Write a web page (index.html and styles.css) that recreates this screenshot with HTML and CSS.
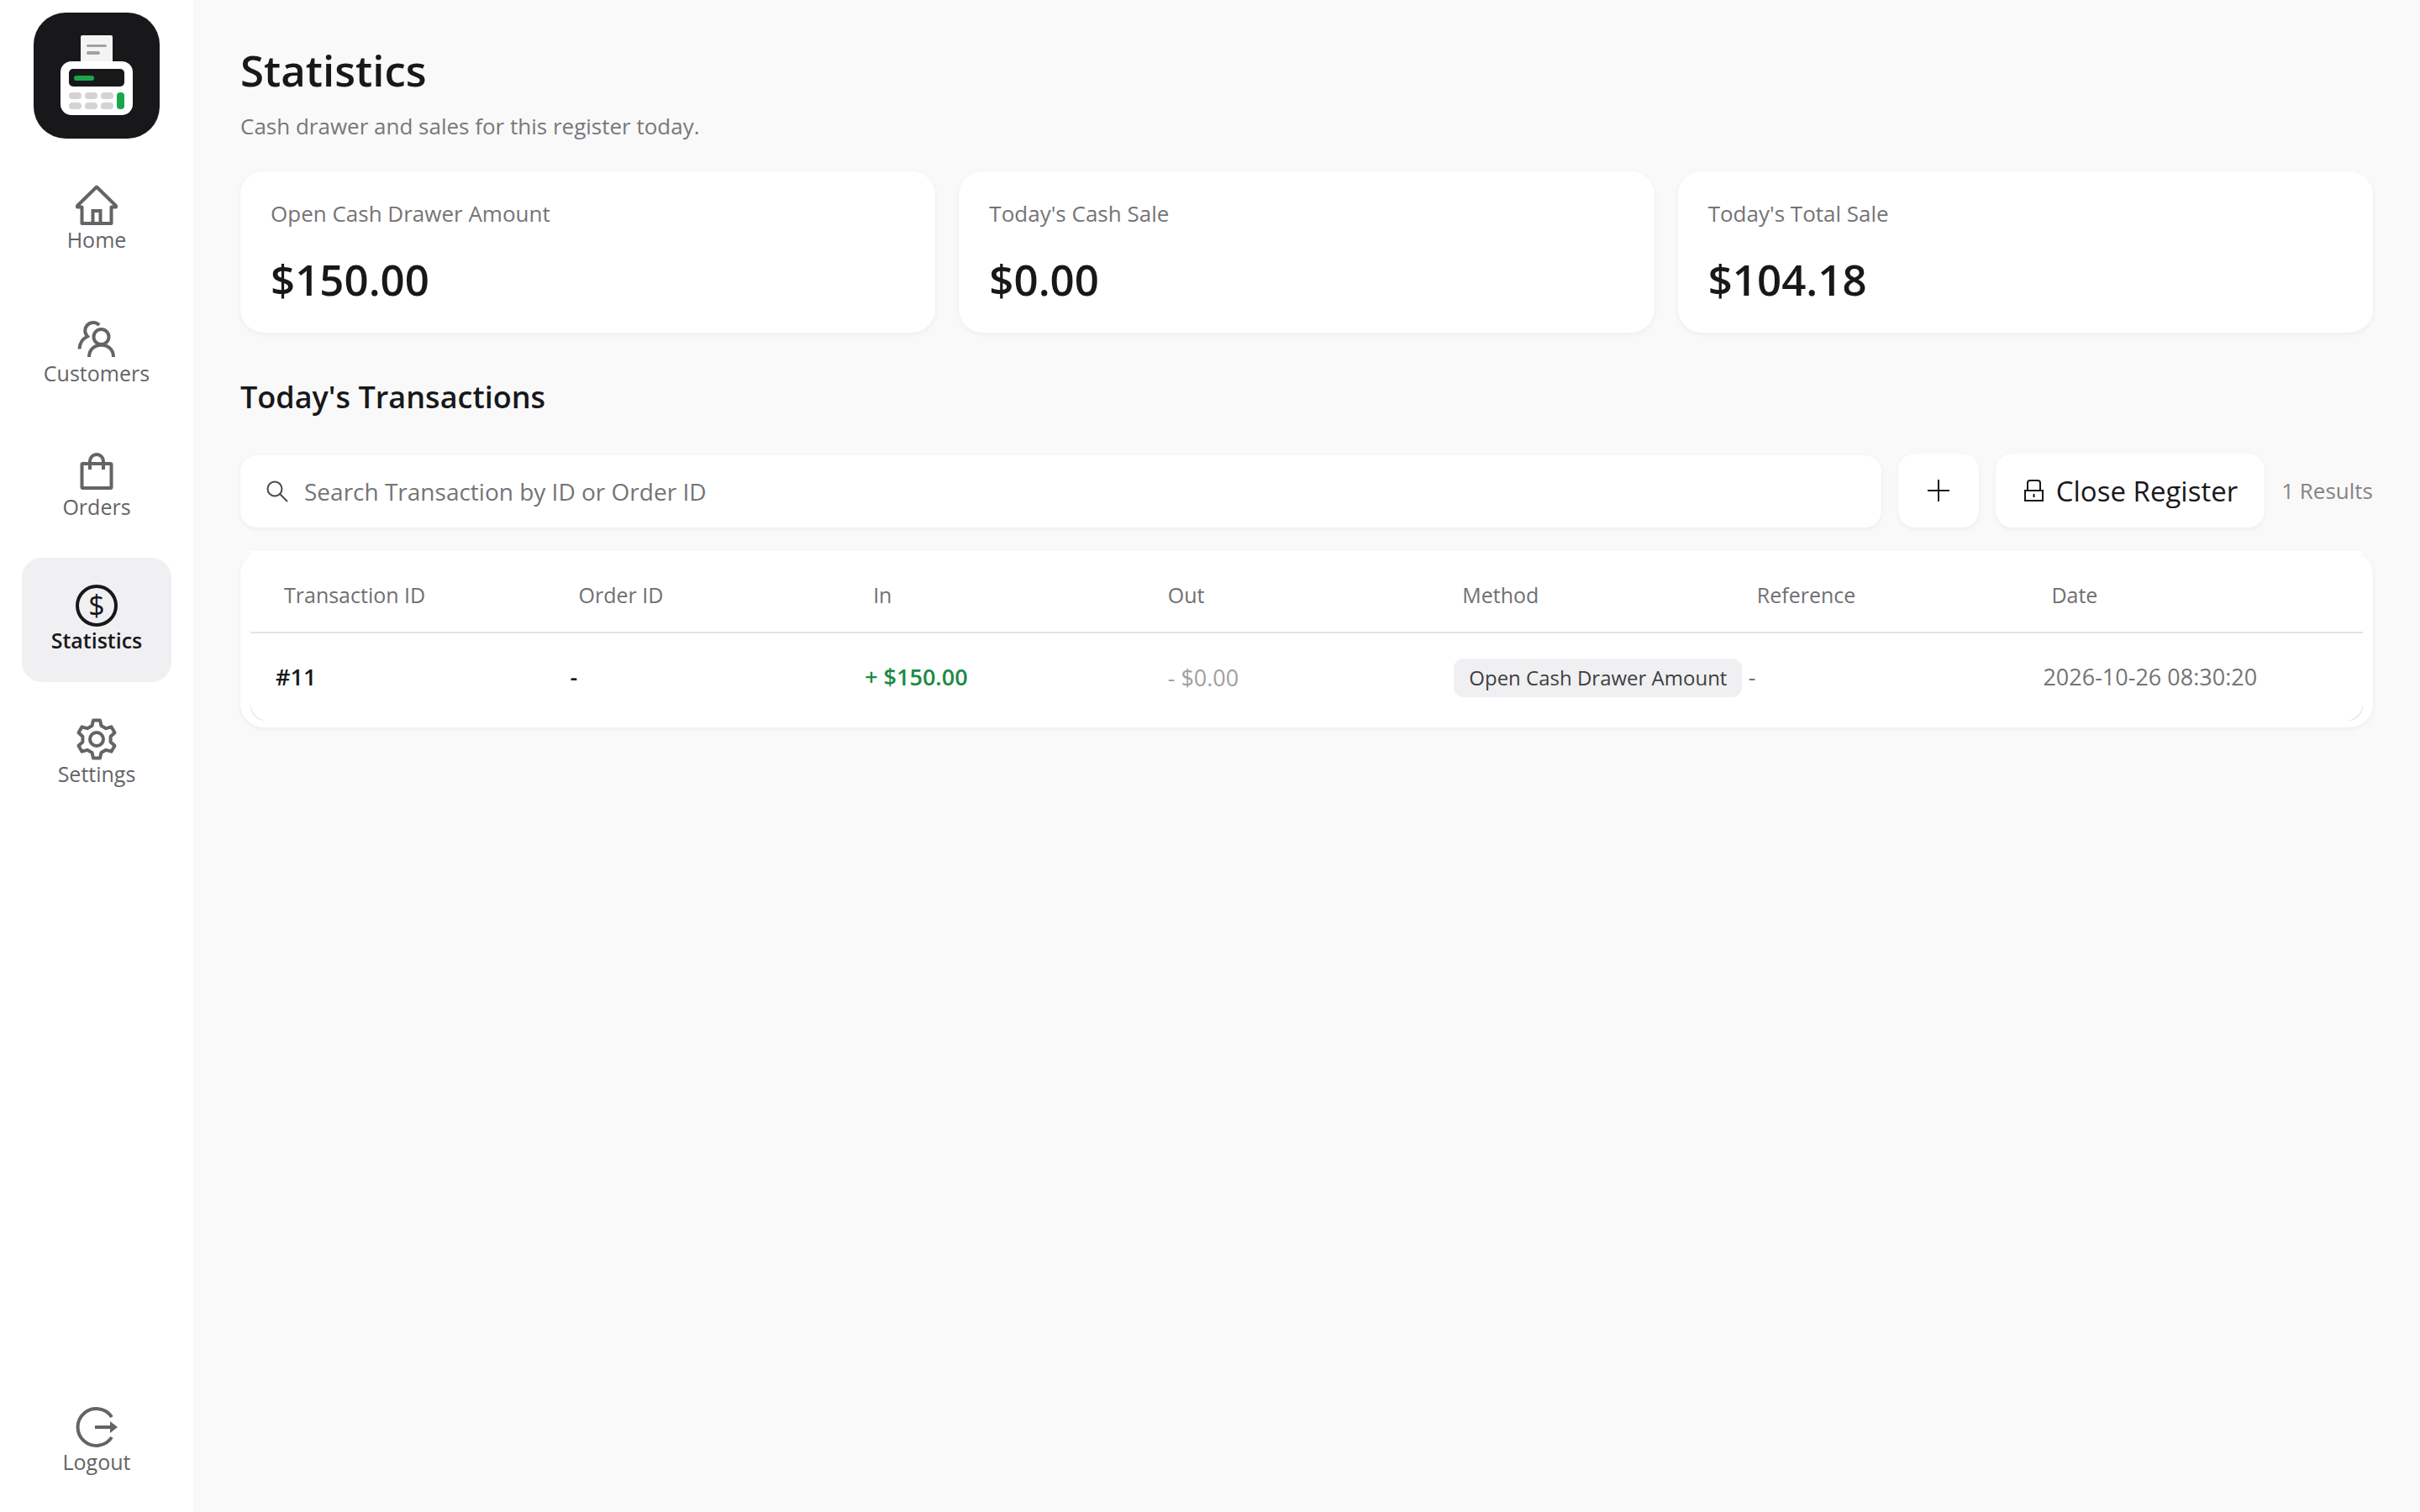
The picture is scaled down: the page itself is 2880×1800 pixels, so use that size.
FILE: index.html
```html
<!DOCTYPE HTML>
<html lang="en">
<head>
<meta charset="utf-8" />
<title>Statistics</title>
<link rel="stylesheet" href="styles.css">
</head>
<body>
<div id="app">
	<div id="sidebar">
		<svg class="logo" viewBox="0 0 150 150">
			<rect width="150" height="150" rx="38" fill="#18181a"/>
			<rect x="56" y="27" width="38" height="40" rx="2" fill="#f4f4f5"/>
			<rect x="63" y="38" width="24" height="3" rx="1.5" fill="#a1a1a3"/>
			<rect x="63" y="46" width="16" height="4" rx="2" fill="#a1a1a3"/>
			<rect x="32" y="58" width="86" height="64" rx="13" fill="#fff"/>
			<rect x="42" y="67" width="66" height="21" rx="5" fill="#18181a"/>
			<rect x="48" y="75" width="24" height="6" rx="3" fill="#1ba64c"/>
			<g fill="#d3d3d5">
				<rect x="42" y="95" width="15" height="8" rx="4"/>
				<rect x="61" y="95" width="15" height="8" rx="4"/>
				<rect x="80" y="95" width="15" height="8" rx="4"/>
				<rect x="42" y="107" width="15" height="8" rx="4"/>
				<rect x="61" y="107" width="15" height="8" rx="4"/>
				<rect x="80" y="107" width="15" height="8" rx="4"/>
			</g>
			<rect x="99" y="95" width="9" height="20" rx="4" fill="#1ba64c"/>
		</svg>
		<nav class="menu">
			<a href="#home">
				<svg viewBox="0 0 50 50"><path d="M25 3.500 2 26v1.500h5.500V47h35V27.500H48V26z" stroke-linejoin="round"/><path d="M20.500 47V32h9v15"/></svg>
				Home
			</a>
			<a href="#customers">
				<svg viewBox="0 0 50 50"><circle cx="30.500" cy="23" r="9"/><path d="M16 47C16 28 45 28 45 47"/><path d="M28 9A9.500 9.500 0 1 0 14 22.500Q5 27 4.500 37.500"/></svg>
				Customers
			</a>
			<a href="#orders">
				<svg viewBox="0 0 50 50"><rect x="7.500" y="15" width="35" height="29" rx="1"/><path d="M17 22V12a8 8 0 0 1 16 0v10"/></svg>
				Orders
			</a>
			<a href="#statistics" class="active">
				<svg viewBox="0 0 50 50"><circle cx="25" cy="25" r="23"/><text x="25" y="37">$</text></svg>
				Statistics
			</a>
			<a href="#settings">
				<svg viewBox="0 0 50 50"><path stroke-linejoin="round" d="M19.500 9 21 2.500h8L30.500 9l5.600 3.200 6.400-1.900 4 6.900-4.900 4.600v6.400l4.900 4.600-4 6.900-6.400-1.900L30.500 41 29 47.500h-8L19.500 41l-5.600-3.200-6.400 1.900-4-6.900 4.900-4.600v-6.400l-4.900-4.600 4-6.900 6.400 1.900z"/><circle cx="25" cy="25" r="8"/></svg>
				Settings
			</a>
		</nav>
		<nav class="menu bottom">
			<a href="#logout">
				<svg viewBox="0 0 50 50"><path d="M43 13A22 22 0 1 0 43 37"/><path d="M23 25h19"/><path d="M41 18v14l9-7z" class="solid"/></svg>
				Logout
			</a>
		</nav>
	</div>

	<div id="main">
		<h1>Statistics</h1>
		<p class="intro">Cash drawer and sales for this register today.</p>

		<div id="cards">
			<div class="card"><h3>Open Cash Drawer Amount</h3><p>$150.00</p></div>
			<div class="card"><h3>Today's Cash Sale</h3><p>$0.00</p></div>
			<div class="card"><h3>Today's Total Sale</h3><p>$104.18</p></div>
		</div>

		<h2>Today's Transactions</h2>

		<div id="tools">
			<label class="search">
				<svg viewBox="0 0 28 28"><circle cx="11" cy="11" r="8.500"/><path d="M17 17l9 9"/></svg>
				<input type="text" placeholder="Search Transaction by ID or Order ID" aria-label="Search Transaction by ID or Order ID">
			</label>
			<button type="button" class="add" aria-label="Add">
				<svg viewBox="0 0 28 28"><path d="M14 1v26M1 14h26"/></svg>
			</button>
			<button type="button" class="close">
				<svg viewBox="0 0 28 28"><rect x="3" y="14" width="21" height="12"/><path d="M6 14V5q0-3 3-3h9q3 0 3 3v9"/><path d="M13.500 18v4"/></svg>
				Close Register
			</button>
			<span class="count">1 Results</span>
		</div>

		<div id="list">
			<div class="clip">
				<table>
					<thead>
						<tr>
							<th>Transaction ID</th>
							<th>Order ID</th>
							<th>In</th>
							<th>Out</th>
							<th>Method</th>
							<th>Reference</th>
							<th>Date</th>
						</tr>
					</thead>
					<tbody>
						<tr>
							<td class="strong">#11</td>
							<td class="strong">-</td>
							<td class="in">+ $150.00</td>
							<td class="out">- $0.00</td>
							<td><span class="tag">Open Cash Drawer Amount</span></td>
							<td>-</td>
							<td>2026-10-26 08:30:20</td>
						</tr>
					</tbody>
				</table>
			</div>
		</div>
	</div>
</div>
</body>
</html>
```
FILE: styles.css
```css
*{ padding:0; margin:0; border:0; box-sizing:border-box;}
body{ background:#f9f9f9; color:#18181a; font-family:"Open Sans","Noto Sans",sans-serif; font-size:28px;}
svg{ display:block; fill:none; stroke:currentColor; flex:none;}
#app{ display:flex; min-height:100vh;}

#sidebar{ width:230px; flex:none; background:#fff; display:flex; flex-direction:column; align-items:center; padding:15px 0 10px 0;}
#sidebar .logo{ width:150px; height:150px; stroke:none;}
#sidebar .menu{ width:178px; margin-top:22px; display:flex; flex-direction:column; gap:11px;}
#sidebar .bottom{ margin-top:auto;}
#sidebar .menu a{ height:148px; padding-top:32px; border-radius:24px; display:flex; flex-direction:column; align-items:center; color:#646467; font-size:25px; line-height:32px; font-weight:500; text-decoration:none;}
#sidebar .menu a.active{ background:#f0f0f2; color:#18181a; font-weight:600;}
#sidebar .menu svg{ width:50px; height:50px; stroke-width:4;}
#sidebar .menu svg text{ fill:currentColor; stroke:none; font-size:34px; font-weight:400; text-anchor:middle;}
#sidebar .menu svg .solid{ fill:currentColor; stroke:none;}

#main{ flex:1; min-width:0; padding:52px 56px;}
h1{ font-size:51px; line-height:62px; font-weight:600;}
h2{ font-size:36px; line-height:50px; font-weight:600; margin:52px 0 42px 0;}
.intro{ margin-top:18px; line-height:36px; font-size:26px; color:#78787a;}

#cards{ display:grid; grid-template-columns:repeat(3,1fr); gap:28px; margin-top:36px;}
.card,.search,#tools button,#list{ background:#fff; box-shadow:0 2px 6px rgba(0,0,0,0.05);}
.card{ padding:32px 36px; border-radius:28px;}
.card h3{ font-size:26px; line-height:36px; font-weight:500; color:#747476;}
.card p{ margin-top:28px; font-size:51px; line-height:64px; font-weight:600;}

#tools{ display:flex; align-items:flex-end; gap:20px;}
.search{ flex:1; height:86px; padding:0 30px; border-radius:20px; display:flex; align-items:center; gap:18px;}
.search svg{ width:28px; height:28px; stroke-width:2; color:#48484a;}
.search input{ flex:1; min-width:0; background:none; outline:none; font:inherit; color:#18181a;}
.search input::placeholder{ color:#747476; opacity:1;}
#tools button{ height:88px; border-radius:20px; display:flex; align-items:center; justify-content:center; font:500 33px "Open Sans","Noto Sans",sans-serif; color:#18181a; cursor:pointer;}
#tools button svg{ width:28px; height:28px; stroke-width:2;}
#tools .add{ width:96px;}
#tools .close{ padding:0 32px; gap:12px;}
.count{ line-height:88px; font-size:26px; color:#848486;}

#list{ margin-top:28px; padding:0 12px 8px 12px; border-radius:28px;}
/* the table corners are rounder than the clip, a thin grey edge stays in each */
#list .clip{ background:#e4e4e6; border-radius:0 0 18px 18px; overflow:hidden;}
#list table{ display:block; background:#fff; border-radius:0 0 21px 21px;}
#list thead,#list tbody{ display:block;}
#list thead{ border-bottom:2px solid #e2e2e3;}
#list tr{ display:grid; grid-template-columns:repeat(7,1fr); padding:36px 30px 28px 30px;}
#list tbody tr{ padding:30px 30px 28px 30px;}
#list th{ padding-left:10px; text-align:left; font-size:25px; line-height:32px; font-weight:500; color:#707072;}
#list td{ font-size:27px; line-height:44px; white-space:nowrap; color:#747476;}
#list .strong{ font-weight:600; color:#18181a;}
#list .in{ font-weight:600; color:#1b8a43;}
#list .out{ padding-left:10px; line-height:46px; color:#a0a0a2;}
#list .tag{ display:inline-block; height:46px; line-height:46px; padding:0 18px; border-radius:12px; background:#f0f0f2; color:#3e3e41; font-size:24px; font-weight:500;}
```
